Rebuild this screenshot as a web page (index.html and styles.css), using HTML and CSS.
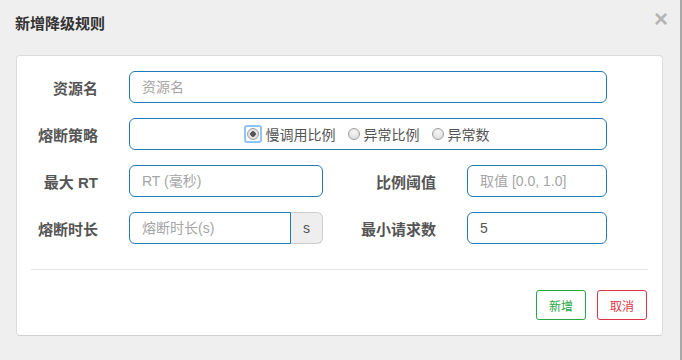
FILE: index.html
```html
<!DOCTYPE html>
<html>
<head>
    <meta charset="utf-8">
    <link rel="stylesheet" href="styles.css">
</head>
<body>
    <div class="dialog">
        <div class="dialog-header">
            <div class="dialog-title">新增降级规则</div>
            <div class="dialog-close">×</div>
        </div>

        <div class="card">
            <div class="form">
                <div class="form-row">
                    <label class="form-label">资源名</label>
                    <input class="form-input input-wide" type="text" placeholder="资源名">
                </div>

                <div class="form-row">
                    <label class="form-label">熔断策略</label>
                    <div class="form-input input-wide radio-box">
                        <label class="radio-item"><span class="focus-ring"><input type="radio" name="grade" class="radio" checked></span>慢调用比例</label>
                        <label class="radio-item"><input type="radio" name="grade" class="radio">异常比例</label>
                        <label class="radio-item"><input type="radio" name="grade" class="radio">异常数</label>
                    </div>
                </div>

                <div class="form-row">
                    <label class="form-label">最大 RT</label>
                    <input class="form-input input-half" type="text" placeholder="RT (毫秒)">
                    <label class="form-label label-second">比例阈值</label>
                    <input class="form-input input-small" type="text" placeholder="取值 [0.0, 1.0]">
                </div>

                <div class="form-row">
                    <label class="form-label">熔断时长</label>
                    <div class="input-group">
                        <input class="form-input group-input" type="text" placeholder="熔断时长(s)">
                        <span class="group-addon">s</span>
                    </div>
                    <label class="form-label label-second">最小请求数</label>
                    <input class="form-input input-small" type="text" value="5">
                </div>
            </div>

            <div class="divider"></div>

            <div class="card-footer">
                <button class="btn btn-success">新增</button>
                <button class="btn btn-danger">取消</button>
            </div>
        </div>
    </div>
</body>
</html>
```

FILE: styles.css
```css
html, body {
    margin: 0;
    height: 100%;
}

body {
    width: 682px;
    height: 360px;
    box-sizing: border-box;
    background: #efefef;
    border-right: 2px solid #a8a8a8;
    font-family: "Liberation Sans", "Noto Sans CJK SC", sans-serif;
    color: #555;
    overflow: hidden;
}

.dialog-header {
    height: 55px;
    box-sizing: border-box;
    display: flex;
    justify-content: space-between;
    align-items: flex-start;
    padding: 14px 12px 0 15px;
}

.dialog-title {
    font-size: 15px;
    line-height: 20px;
    font-weight: bold;
    color: #333;
}

.dialog-close {
    margin-top: -10px;
    font-size: 24px;
    line-height: 30px;
    font-weight: bold;
    color: #b5b5b5;
}

.card {
    margin: 0 17px 0 16px;
    background: #fff;
    border: 1px solid #dcdcdc;
    border-bottom-color: #d0d0d0;
    border-radius: 4px;
}

.form {
    display: flex;
    flex-direction: column;
    gap: 15px;
    padding-top: 15px;
}

.form-row {
    display: flex;
    align-items: center;
    height: 32px;
}

.form-label {
    width: 81px;
    margin-right: 31px;
    text-align: right;
    font-size: 15px;
    font-weight: bold;
    color: #555;
}

.label-second {
    width: 113px;
}

.form-input {
    height: 32px;
    box-sizing: border-box;
    border: 1px solid #1f7ab5;
    border-radius: 6px;
    padding: 0 12px;
    font-family: inherit;
    font-size: 14px;
    color: #555;
    background: #fff;
    outline: none;
}

.form-input::placeholder {
    color: #a5a5a5;
}

.input-wide {
    width: 478px;
}

.input-half {
    width: 194px;
}

.input-small {
    width: 140px;
}

.radio-box {
    display: flex;
    justify-content: center;
    align-items: center;
    gap: 12px;
}

.radio-item {
    display: flex;
    align-items: center;
    gap: 4px;
    font-size: 14px;
    color: #555;
}

.radio {
    appearance: none;
    -webkit-appearance: none;
    display: block;
    margin: 0;
    width: 12px;
    height: 12px;
    border-radius: 50%;
    border: 1px solid #a0a0a0;
    background: radial-gradient(circle at 50% 35%, #f6f6f6 0%, #d8d8d8 100%);
    box-sizing: border-box;
}

.radio:checked {
    background: radial-gradient(circle, #555 0, #555 2.5px, #e4e4e4 3px, #dadada 100%);
}

.focus-ring {
    display: block;
    padding: 1px;
    margin: -3px 0 -3px -3px;
    border: 2px solid #8ec3f5;
    border-radius: 3px;
    background: #fff;
}

.input-group {
    display: flex;
    width: 194px;
}

.group-input {
    width: 162px;
    border-radius: 6px 0 0 6px;
}

.group-addon {
    width: 32px;
    height: 32px;
    box-sizing: border-box;
    display: flex;
    align-items: center;
    justify-content: center;
    background: #eee;
    border: 1px solid #ccc;
    border-left: none;
    border-radius: 0 6px 6px 0;
    font-size: 14px;
    color: #555;
}

.divider {
    height: 1px;
    margin: 25px 14px 0 14px;
    background: #e5e5e5;
}

.card-footer {
    display: flex;
    justify-content: flex-end;
    gap: 11px;
    padding: 20px 15px 15px 0;
}

.btn {
    width: 50px;
    height: 30px;
    background: #fff;
    border: 1px solid;
    border-radius: 3px;
    font-family: inherit;
    font-size: 12px;
    padding: 0;
    cursor: pointer;
}

.btn-success {
    color: #28a745;
    border-color: #28a745;
}

.btn-danger {
    color: #dc3545;
    border-color: #dc3545;
}
```
